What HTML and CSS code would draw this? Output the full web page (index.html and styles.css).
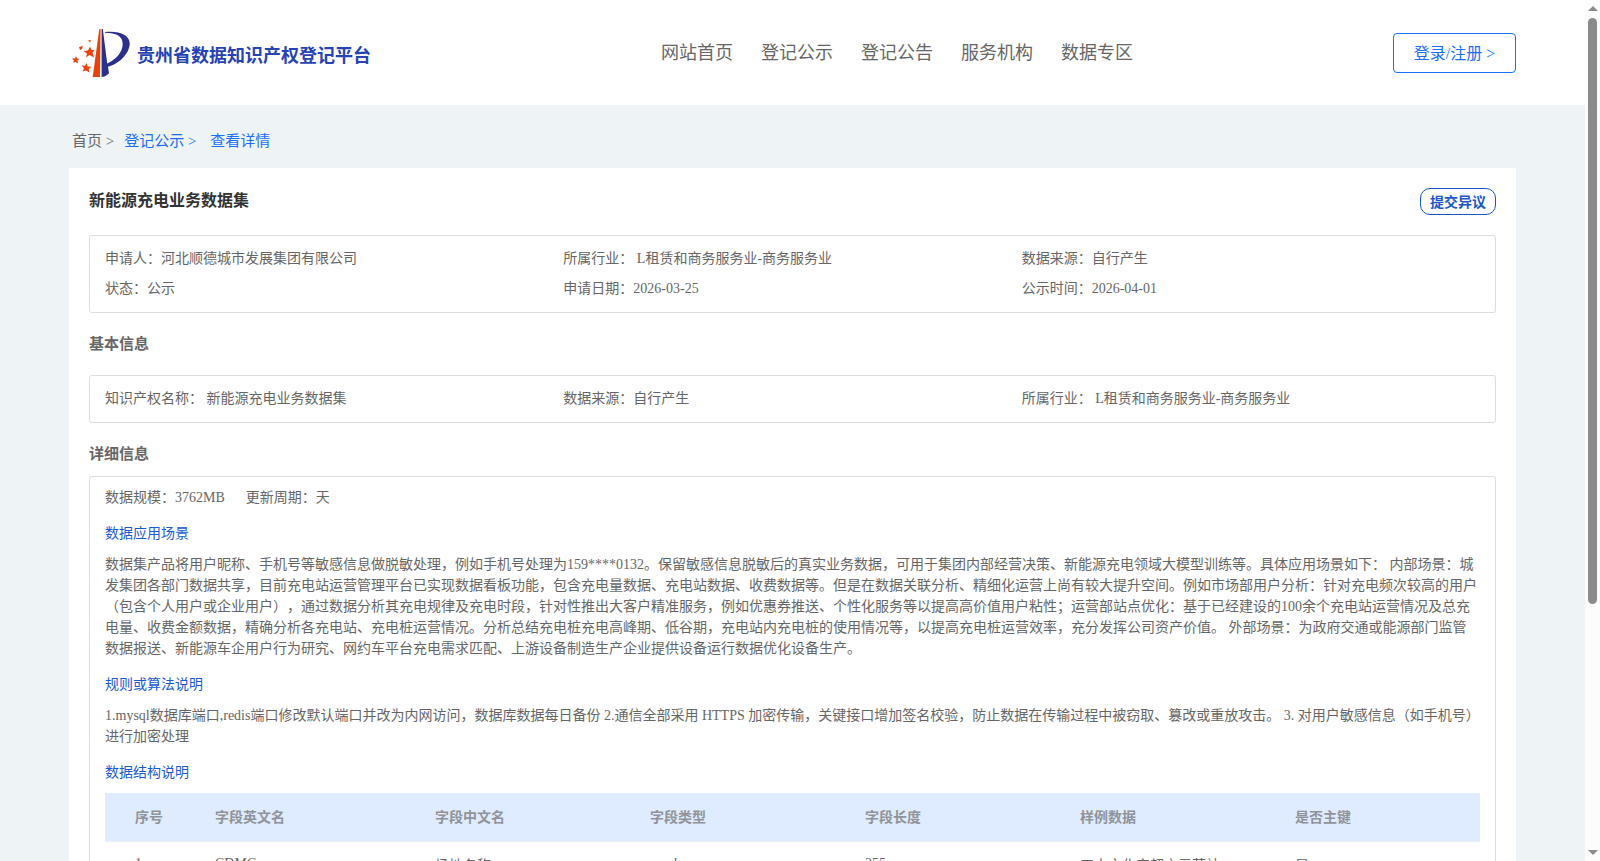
FILE: index.html
```
<!DOCTYPE html>
<html lang="zh-CN">
<head>
    <meta charset="UTF-8">
    <meta name="viewport" content="width=device-width, initial-scale=1.0">
    <title>贵州省数据知识产权登记平台</title>
    <link rel="stylesheet" href="styles.css">
</head>
<body>
    <header class="header">
        <a class="logo" href="#">
            <svg class="logo-icon" viewBox="0 0 58 50" aria-hidden="true">
                <path fill="#e8430f" d="M27.3 1 L28.6 1 L28 49 L20.7 49 Z"/>
                <path fill="#2b318a" d="M29.6 1 L30.8 1 L35.2 35.4 C42 33 50.7 25 50.7 16 C50.7 8 44 4.8 33 4.8 L33 4 C47 2.6 57.7 6.5 57.7 15.6 C57.7 25 48 35.5 36 38.8 L37 45.2 C35 47.5 32 49 29.6 49 Z"/>
                <path fill="#e8430f" d="M18 18.5 L19.5 22 L22.5 22 L20.5 24.5 L22 29.5 L17.5 27 L14 29.5 L15 25.5 L11.5 23 L16 22.5 Z"/>
                <path fill="#e8430f" d="M14.5 35 L15.7 38.5 L19.5 38.7 L16.7 41 L17.5 44.5 L14 42.6 L10.5 43.5 L12 40.3 L9.5 37.5 L13 37.7 Z"/>
                <path fill="#e8430f" d="M4 28 L5 30.5 L7.5 30.7 L5.5 32.5 L6 35.5 L3.5 34 L1 34.8 L2 32.4 L0 30.3 L3 30.4 Z"/>
                <path fill="#e8430f" d="M7 19 L11 18 L10 21 L8 22 Z M16 12.5 L19 12 L18 14.5 Z"/>
            </svg>
            <span>贵州省数据知识产权登记平台</span>
        </a>
        <nav class="nav">
            <a href="#">网站首页</a>
            <a href="#">登记公示</a>
            <a href="#">登记公告</a>
            <a href="#">服务机构</a>
            <a href="#">数据专区</a>
        </nav>
        <button class="login-btn" type="button">登录/注册 &gt;</button>
    </header>

    <main class="main">
        <div class="breadcrumb">
            <a class="home" href="#">首页 &gt;</a>
            <a href="#">登记公示 &gt;&nbsp;</a>
            <a href="#">查看详情</a>
        </div>

        <div class="card">
            <div class="card-head">
                <h1>新能源充电业务数据集</h1>
                <button class="objection-btn" type="button">提交异议</button>
            </div>

            <div class="box info">
                <div>申请人：河北顺德城市发展集团有限公司</div>
                <div>所属行业： L租赁和商务服务业-商务服务业</div>
                <div>数据来源：自行产生</div>
                <div>状态：公示</div>
                <div>申请日期：2026-03-25</div>
                <div>公示时间：2026-04-01</div>
            </div>

            <h2>基本信息</h2>
            <div class="box info">
                <div>知识产权名称： 新能源充电业务数据集</div>
                <div>数据来源：自行产生</div>
                <div>所属行业： L租赁和商务服务业-商务服务业</div>
            </div>

            <h2 class="tight">详细信息</h2>
            <div class="box">
                <div class="scale">
                    <span>数据规模：3762MB</span>
                    <span>更新周期：天</span>
                </div>

                <h3>数据应用场景</h3>
                <p>数据集产品将用户昵称、手机号等敏感信息做脱敏处理，例如手机号处理为159****0132。保留敏感信息脱敏后的真实业务数据，可用于集团内部经营决策、新能源充电领域大模型训练等。具体应用场景如下： 内部场景：城发集团各部门数据共享，目前充电站运营管理平台已实现数据看板功能，包含充电量数据、充电站数据、收费数据等。但是在数据关联分析、精细化运营上尚有较大提升空间。例如市场部用户分析：针对充电频次较高的用户（包含个人用户或企业用户），通过数据分析其充电规律及充电时段，针对性推出大客户精准服务，例如优惠券推送、个性化服务等以提高高价值用户粘性；运营部站点优化：基于已经建设的100余个充电站运营情况及总充电量、收费金额数据，精确分析各充电站、充电桩运营情况。分析总结充电桩充电高峰期、低谷期，充电站内充电桩的使用情况等，以提高充电桩运营效率，充分发挥公司资产价值。 外部场景：为政府交通或能源部门监管数据报送、新能源车企用户行为研究、网约车平台充电需求匹配、上游设备制造生产企业提供设备运行数据优化设备生产。</p>

                <h3>规则或算法说明</h3>
                <p>1.mysql数据库端口,redis端口修改默认端口并改为内网访问，数据库数据每日备份 2.通信全部采用 HTTPS 加密传输，关键接口增加签名校验，防止数据在传输过程中被窃取、篡改或重放攻击。 3. 对用户敏感信息（如手机号）进行加密处理</p>

                <h3>数据结构说明</h3>
                <table class="fields">
                    <thead>
                        <tr>
                            <th class="col-no">序号</th>
                            <th class="col-en">字段英文名</th>
                            <th>字段中文名</th>
                            <th>字段类型</th>
                            <th>字段长度</th>
                            <th>样例数据</th>
                            <th class="col-key">是否主键</th>
                        </tr>
                    </thead>
                    <tbody>
                        <tr>
                            <td>1</td>
                            <td>CDMC</td>
                            <td>场地名称</td>
                            <td>varchar</td>
                            <td>255</td>
                            <td>工人文化宫超充示范站</td>
                            <td>是</td>
                        </tr>
                    </tbody>
                </table>
            </div>
        </div>
    </main>

    <div class="scrollbar" aria-hidden="true">
        <div class="arrow arrow-up"></div>
        <div class="track">
            <div class="thumb"></div>
        </div>
        <div class="arrow arrow-down"></div>
    </div>
</body>
</html>
```
FILE: styles.css
```
* {
    box-sizing: border-box;
}

body {
    margin: 0;
    padding-right: 15px;
    background-color: #eef3f6;
    color: #666;
    font-family: "Liberation Serif", "Noto Sans CJK SC", serif;
    font-size: 14px;
    text-spacing-trim: space-all;
}

h1, h2, h3, p {
    margin: 0;
}

a {
    text-decoration: none;
}

.header {
    display: flex;
    justify-content: space-between;
    align-items: center;
    height: 105px;
    padding: 0 69px;
    background-color: #fff;
}

.logo {
    display: flex;
    align-items: center;
    gap: 7px;
    width: 332px;
    padding-left: 3px;
    color: #2643b4;
    font-size: 18px;
    font-weight: bold;
}

.logo-icon {
    width: 58px;
    height: 50px;
}

.logo span {
    padding-top: 2px;
}

.nav {
    display: flex;
    padding-bottom: 4px;
}

.nav a {
    padding: 0 14px;
    color: #666;
    font-size: 18px;
}

.login-btn {
    width: 123px;
    height: 40px;
    padding: 0 0 2px;
    border: 1px solid #1a6ff5;
    border-radius: 4px;
    background-color: #fff;
    color: #1a6ff5;
    font-family: inherit;
    font-size: 16px;
}

.main {
    padding: 0 69px;
}

.breadcrumb {
    display: flex;
    gap: 10px;
    height: 63px;
    padding: 6px 3px 0;
    align-items: center;
    font-size: 15px;
}

.breadcrumb a {
    color: #1a6ff5;
}

.breadcrumb .home {
    color: #666;
}

.card {
    padding: 20px;
    background-color: #fff;
}

.card-head {
    display: flex;
    justify-content: space-between;
    align-items: flex-start;
    height: 47px;
}

h1 {
    color: #333;
    font-size: 16px;
    line-height: 25px;
}

.objection-btn {
    width: 76px;
    height: 27px;
    padding: 0 0 2px;
    border: 1px solid #1a56c4;
    border-radius: 10px;
    background-color: #fff;
    color: #1a56c4;
    font-family: inherit;
    font-size: 14px;
    font-weight: bold;
}

.box {
    border: 1px solid #ddd;
    border-radius: 3px;
    padding: 8px 15px;
}

.info {
    display: grid;
    grid-template-columns: repeat(3, 1fr);
    line-height: 30px;
}

h2 {
    height: 62px;
    color: #666;
    font-size: 15px;
    line-height: 63px;
}

.tight {
    height: 53px;
}

.scale {
    display: flex;
    gap: 21px;
    line-height: 26px;
}

h3 {
    padding: 8px 0 5px;
    color: #1a5ad0;
    font-size: 14px;
    font-weight: normal;
    line-height: 30px;
}

p {
    line-height: 21px;
    padding-bottom: 3px;
}

.fields {
    width: 100%;
    border-collapse: collapse;
    table-layout: fixed;
    text-align: left;
}

.fields th,
.fields td {
    height: 48px;
    padding: 0 10px 2px;
    border-bottom: 1px solid #ebeef5;
}

.fields th {
    background-color: #dfebfe;
    color: #909399;
}

.fields th:first-child,
.fields td:first-child {
    padding-left: 30px;
}

.col-no {
    width: 100px;
}

.col-en {
    width: 220px;
}

.col-key {
    width: 195px;
}

.scrollbar {
    position: fixed;
    top: 0;
    right: 0;
    bottom: 0;
    display: flex;
    flex-direction: column;
    align-items: center;
    width: 15px;
    padding: 6px 0;
    background-color: #fcfcfc;
}

.arrow {
    border: 5px solid transparent;
}

.arrow-up {
    border-top: none;
    border-bottom-color: #8b8b8b;
}

.arrow-down {
    border-bottom: none;
    border-top-color: #8b8b8b;
}

.track {
    flex: 1;
    padding: 7px 0;
}

.thumb {
    width: 9px;
    height: 71%;
    border-radius: 5px;
    background-color: #8b8b8b;
}
```
